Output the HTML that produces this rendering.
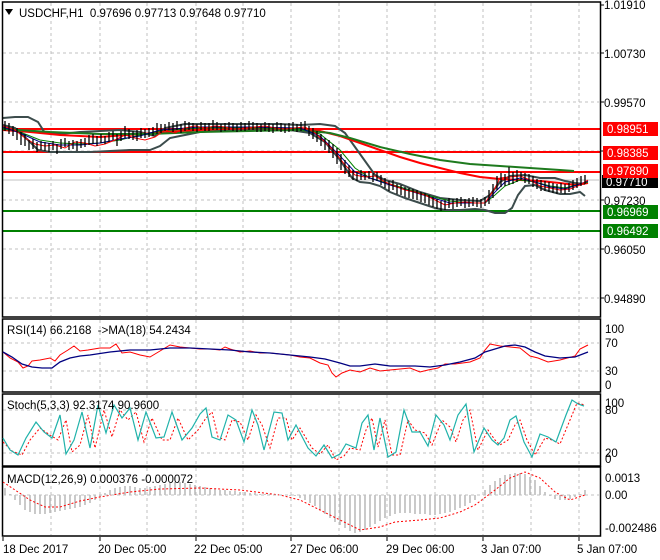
<!DOCTYPE html>
<html><head><meta charset="utf-8"><style>
body{margin:0;background:#fff;}
svg{display:block;font-family:"Liberation Sans",sans-serif;}
</style></head><body>
<svg width="660" height="560" viewBox="0 0 660 560" xmlns="http://www.w3.org/2000/svg">
<rect width="660" height="560" fill="#fff"/>
<!-- grid -->
<g stroke="#c0c0c0" stroke-dasharray="3,3" stroke-width="1">
<path d="M51 3V316M100 3V316M147 3V316M196 3V316M243 3V316M291 3V316M339 3V316M387 3V316M435 3V316M483 3V316M531 3V316M579 3V316"/>
<path d="M3 53H599M3 102H599M3 151H599M3 200H599M3 249H599M3 298H599"/>
<path d="M51 320V391M100 320V391M147 320V391M196 320V391M243 320V391M291 320V391M339 320V391M387 320V391M435 320V391M483 320V391M531 320V391M579 320V391M3 343H599M3 371H599"/>
<path d="M51 395V464M100 395V464M147 395V464M196 395V464M243 395V464M291 395V464M339 395V464M387 395V464M435 395V464M483 395V464M531 395V464M579 395V464M3 410H599M3 453H599"/>
<path d="M51 468V535M100 468V535M147 468V535M196 468V535M243 468V535M291 468V535M339 468V535M387 468V535M435 468V535M483 468V535M531 468V535M579 468V535"/>
</g>
<!-- price lines -->
<line x1="3" y1="180" x2="599" y2="180" stroke="#c0c0c0"/>
<g stroke="#ff0000" stroke-width="2"><path d="M3 129H600M3 152H600M3 172H600"/></g>
<g stroke="#008000" stroke-width="2"><path d="M3 211H600M3 231H600"/></g>
<!-- bollinger -->
<g fill="none" stroke="#3c4c4c" stroke-width="2">
<polyline points="3,118 15,117 28,117 38,122 45,133 60,134 80,132 100,131 120,130 140,132 155,136 165,128 175,126 185,124 200,124 230,124 260,124 280,124 300,125 320,124 335,126 345,133 360,154 375,175 385,180 400,184 420,192 440,198 460,200 480,201 490,195 500,182 510,176 525,175 540,178 555,178 565,181 575,183 585,184"/>
<polyline points="3,125 15,128 28,140 38,150 50,152 70,152 90,152 110,151 130,150 150,150 160,146 170,138 180,136 200,132 230,130 260,130 290,130 310,133 325,142 340,160 352,178 360,182 370,183 380,186 390,192 405,198 420,203 435,208 445,210 460,210 475,209 485,210 495,213 505,213 512,208 518,195 525,186 535,185 545,190 560,194 570,194 580,192 585,196"/>
</g>
<!-- MAs -->
<polyline fill="none" stroke="#ff0000" stroke-width="2" points="3,130 30,132 60,135 100,137 140,134 180,131 220,129 260,128 300,129 320,131 340,136 360,143 380,150 400,157 420,163 440,168 460,173 480,177 500,179 520,180 540,181 560,183 575,185 588,183"/>
<polyline fill="none" stroke="#1e7a1e" stroke-width="2" points="3,129 50,132 100,134 150,134 200,132 250,131 300,130 330,133 350,138 380,147 410,154 440,160 470,164 500,166 530,168 560,170 574,171"/>
<polyline fill="none" stroke="#008000" stroke-width="1" points="3,128 20,132 40,140 60,143 80,144 100,143 120,140 140,135 160,131 200,128 250,128 300,129 320,134 340,150 355,168 370,178 390,184 410,190 430,196 450,201 470,203 485,203 495,195 505,186 520,180 535,182 550,186 565,188 580,184 588,182"/>
<polyline fill="none" stroke="#00008b" stroke-width="1" points="3,127 20,133 40,142 60,145 80,145 100,143 120,139 140,136 160,130 200,127 250,127 300,128 320,136 340,156 355,172 370,178 390,185 410,191 430,197 450,203 470,203 485,203 495,192 505,182 520,178 535,182 550,187 565,189 580,184 588,181"/>
<!-- price -->
<polyline fill="none" stroke="#ff0000" stroke-width="1" points="3,126 15,130 25,138 35,144 45,146 55,145 65,148 75,142 85,143 95,146 105,144 115,140 125,135 135,138 145,140 155,137 165,130 175,133 185,128 195,126 205,128 215,126 225,127 235,129 245,128 255,127 265,126 275,128 285,129 295,128 305,127 315,133 325,142 335,152 345,165 355,175 365,177 375,176 385,182 395,186 405,190 415,192 425,195 435,200 445,205 455,203 465,202 475,203 485,203 495,188 500,178 510,177 520,176 530,180 540,186 550,188 560,190 570,189 580,185 588,180"/>
<path fill="none" stroke="#000" stroke-width="1.3" d="M5 121V131M9 123V134M13 126V136M17 128V140M21 132V145M25 134V146M29 140V150M33 139V149M37 142V152M41 141V150M45 142V151M49 143V152M53 141V150M57 144V154M61 139V149M65 138V147M69 141V150M73 140V149M77 141V151M81 139V148M85 138V147M89 135V145M93 134V144M97 136V146M101 134V143M105 136V144M109 132V142M113 131V140M117 134V146M121 131V141M125 126V138M129 129V139M133 131V140M137 130V141M141 128V138M145 129V138M149 128V137M153 127V136M157 123V134M161 124V133M165 124V131M169 122V130M173 123V132M177 121V130M181 124V133M185 121V131M189 122V130M193 123V131M197 124V132M201 122V130M205 123V131M209 123V131M213 120V130M217 122V130M221 124V132M225 123V131M229 122V130M233 123V131M237 124V132M241 122V131M245 123V131M249 121V130M253 122V130M257 123V132M261 124V132M265 122V131M269 123V132M273 124V133M277 122V131M281 123V132M285 124V133M289 123V132M293 122V131M297 124V132M301 122V131M305 121V130M309 126V136M313 128V139M317 131V142M321 134V146M325 138V150M329 140V153M333 144V158M337 148V164M341 154V170M345 160V174M349 165V177M353 170V180M357 172V181M361 170V180M365 172V180M369 171V179M373 173V182M377 172V181M381 175V185M385 178V188M389 181V191M393 180V190M397 184V194M401 185V195M405 187V197M409 188V198M413 189V199M417 190V200M421 192V202M425 193V203M429 195V205M433 197V207M437 199V209M441 201V211M445 200V210M449 198V208M453 199V209M457 198V207M461 197V206M465 199V208M469 198V207M473 197V206M477 198V207M481 199V208M485 197V206M489 190V204M493 184V198M497 176V190M501 173V187M505 174V186M509 167V185M513 172V184M517 170V182M521 172V180M525 173V183M529 174V184M533 176V187M537 179V189M541 180V191M545 181V191M549 182V192M553 183V193M557 184V194M561 183V193M565 184V194M569 183V192M573 180V190M577 178V188M581 176V186M585 175V184"/>
<!-- frames -->
<g fill="none" stroke="#000" stroke-width="1.5">
<rect x="2.5" y="2" width="598" height="315"/>
<rect x="2.5" y="319" width="598" height="73"/>
<rect x="2.5" y="394" width="598" height="72"/>
<rect x="2.5" y="467" width="598" height="69"/>
</g>
<!-- RSI -->
<polyline fill="none" stroke="#ff0000" stroke-width="1" points="3,352 10,358 18,362 23,368 28,366 32,361 40,360 50,358 55,361 60,355 68,350 74,346 80,351 88,350 100,348 110,348 116,344 122,353 130,352 140,355 150,357 160,351 170,345 180,347 190,348 200,349 210,349 220,350 225,347 230,349 240,352 250,351 260,353 270,353 280,354 290,355 300,357 310,358 320,363 328,365 332,373 336,377 342,373 350,370 360,372 370,368 380,371 390,370 400,369 410,368 420,372 428,370 438,368 445,364 455,364 470,362 480,358 485,350 490,344 500,346 510,347 520,348 530,356 538,358 548,362 560,360 575,356 580,349 588,345"/>
<polyline fill="none" stroke="#000080" stroke-width="1.3" points="3,352 12,357 22,364 32,367 42,368 52,368 60,362 70,358 80,356 90,355 110,352 130,350 150,350 170,348 190,348 210,349 230,350 250,352 270,353 290,355 310,357 325,359 340,363 350,366 360,366 375,364 390,366 400,366 415,366 430,367 445,365 460,362 475,358 485,352 495,349 505,346 515,345 525,347 535,352 545,356 560,358 575,357 588,352"/>
<text x="7" y="334" font-size="11.5" fill="#000">RSI(14) 66.2168&#160; -&gt;MA(18) 54.2434</text>
<!-- Stoch -->
<polyline fill="none" stroke="#ff0000" stroke-width="1" stroke-dasharray="2,2" points="3,442 12,451 22,455 30,440 40,428 50,435 58,440 66,420 72,452 80,445 88,415 95,448 104,410 112,437 120,410 128,420 136,412 144,442 152,418 162,440 170,440 178,418 188,440 198,430 206,418 212,412 218,437 225,440 232,420 240,422 248,440 256,415 262,425 270,448 278,418 286,418 292,440 300,428 312,448 320,454 328,445 336,460 344,456 350,448 360,450 366,430 372,418 378,447 385,420 392,455 400,455 408,420 415,430 425,433 432,445 442,420 450,427 456,442 463,420 470,410 478,450 488,430 495,440 500,445 508,440 515,425 520,420 527,440 535,455 545,438 552,440 560,444 570,420 577,403 585,405"/>
<polyline fill="none" stroke="#20b2aa" stroke-width="1.2" points="3,438 10,450 18,455 26,438 36,422 44,432 52,438 60,415 66,454 74,440 82,412 90,448 98,405 106,433 114,405 122,418 130,408 138,440 146,412 156,438 164,437 172,412 182,440 192,428 200,414 206,408 212,437 220,440 228,415 236,420 244,442 252,410 258,425 264,450 274,412 282,413 288,440 296,425 308,448 316,456 324,445 332,458 340,454 346,444 356,448 362,423 368,415 374,450 380,418 388,457 396,452 404,410 412,432 420,432 428,446 436,415 444,425 450,440 458,415 466,404 474,452 484,428 492,440 498,445 504,438 510,420 516,416 524,442 532,457 540,434 548,437 556,442 566,415 572,400 578,404 584,406"/>
<text x="7" y="409" font-size="11.5" fill="#000">Stoch(5,3,3) 92.3174 90.9600</text>
<!-- MACD -->
<g stroke="#bcbcbc" stroke-width="1.6">
<path d="M5 495V488M10 495V494M15 495V500M20 495V505M25 495V510M30 495V512M35 495V514M40 495V514M45 495V514M50 495V513M55 495V512M60 495V511M65 495V510M70 495V509M75 495V508M80 495V507M85 495V505M90 495V503M95 495V500M100 495V497M105 495V493M110 495V490M115 495V488M120 495V487M125 495V486M130 495V486M135 495V487M140 495V488M145 495V488M150 495V487M155 495V486M160 495V485M165 495V484M170 495V483M175 495V482M180 495V482M185 495V483M190 495V484M195 495V485M200 495V486M205 495V487M210 495V488M215 495V489M220 495V490M225 495V490M230 495V491M235 495V491M240 495V492M245 495V492M250 495V493M255 495V493M260 495V494M265 495V494M270 495V494M275 495V494M280 495V495M285 495V495M290 495V496M295 495V496M300 495V498M305 495V500M310 495V503M315 495V506M320 495V510M325 495V514M330 495V518M335 495V522M340 495V525M345 495V528M350 495V531M355 495V533M360 495V532M365 495V530M370 495V527M375 495V524M380 495V521M385 495V518M390 495V516M395 495V514M400 495V513M405 495V513M410 495V513M415 495V514M420 495V514M425 495V514M430 495V515M435 495V515M440 495V514M445 495V513M450 495V512M455 495V510M460 495V508M465 495V506M470 495V503M475 495V500M480 495V495M485 495V490M490 495V485M495 495V481M500 495V478M505 495V475M510 495V474M515 495V473M520 495V473M525 495V474M530 495V477M535 495V480M540 495V486M545 495V492M550 495V496M555 495V499M560 495V500M565 495V500M570 495V499M575 495V497M580 495V494M585 495V490"/>
</g>
<polyline fill="none" stroke="#ff0000" stroke-width="1" stroke-dasharray="2,2" points="3,482 15,490 30,500 45,507 60,507 80,501 100,497 130,492 160,489 200,488 240,490 280,495 300,500 320,510 340,520 360,530 380,527 395,522 420,520 440,518 460,512 475,505 495,490 510,478 525,472 540,478 555,492 570,500 585,495"/>
<line x1="3" y1="495" x2="599" y2="495" stroke="#c0c0c0" stroke-dasharray="3,3"/>
<text x="7" y="483" font-size="11.5" fill="#000">MACD(12,26,9) 0.000376 -0.000072</text>
<!-- main header -->
<path d="M5 9L13 9L9 15Z" fill="#000"/>
<text x="19" y="17" font-size="11.5" fill="#000">USDCHF,H1&#160; 0.97696 0.97713 0.97648 0.97710</text>
<!-- right axis -->
<g font-size="11.5" fill="#000">
<text x="604" y="9">1.01910</text>
<text x="604" y="58">1.00730</text>
<text x="604" y="107">0.99570</text>
<text x="604" y="205">0.97230</text>
<text x="604" y="254">0.96050</text>
<text x="604" y="303">0.94890</text>
<text x="605" y="333">100</text><text x="605" y="347">70</text><text x="605" y="375">30</text><text x="605" y="389">0</text>
<text x="605" y="407">100</text><text x="605" y="414">80</text><text x="605" y="457">20</text><text x="605" y="463">0</text>
<text x="605" y="482">0.0013</text><text x="605" y="499">0.00</text><text x="605" y="532">-0.002486</text>
</g>
<g stroke="#000"><path d="M600 5h4M600 53h4M600 102h4M600 151h4M600 200h4M600 249h4M600 298h4"/></g>
<rect x="602" y="175" width="56" height="13" fill="#000"/>
<text x="606" y="186" font-size="11.5" fill="#fff">0.97710</text>
<g font-size="11.5" fill="#fff">
<rect x="603" y="122" width="55" height="14" fill="#ff0000"/><text x="607" y="133">0.98951</text>
<rect x="603" y="146" width="55" height="14" fill="#ff0000"/><text x="607" y="157">0.98385</text>
<rect x="603" y="164" width="55" height="14" fill="#ff0000"/><text x="607" y="175">0.97890</text>
<rect x="603" y="205" width="55" height="14" fill="#008000"/><text x="607" y="216">0.96969</text>
<rect x="603" y="224" width="55" height="14" fill="#008000"/><text x="607" y="235">0.96492</text>
</g>
<!-- bottom axis -->
<g stroke="#000"><path d="M3 537v4M100 537v4M196 537v4M291 537v4M387 537v4M483 537v4M579 537v4"/></g>
<g font-size="11.5" fill="#000">
<text x="3" y="553">18 Dec 2017</text>
<text x="98" y="553">20 Dec 05:00</text>
<text x="194" y="553">22 Dec 05:00</text>
<text x="290" y="553">27 Dec 06:00</text>
<text x="386" y="553">29 Dec 06:00</text>
<text x="481" y="553">3 Jan 07:00</text>
<text x="577" y="553">5 Jan 07:00</text>
</g>
</svg>
</body></html>
